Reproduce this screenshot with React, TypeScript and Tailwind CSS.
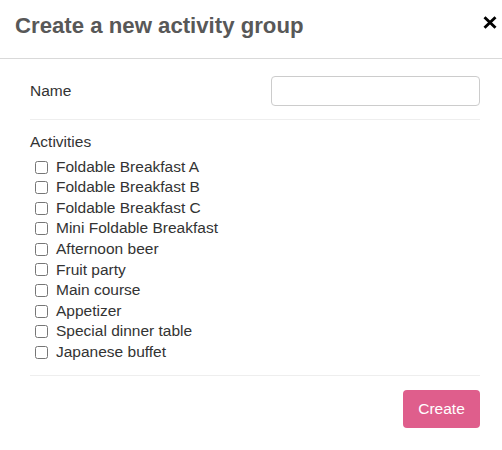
import React from "react";

const activities = [
  "Foldable Breakfast A",
  "Foldable Breakfast B",
  "Foldable Breakfast C",
  "Mini Foldable Breakfast",
  "Afternoon beer",
  "Fruit party",
  "Main course",
  "Appetizer",
  "Special dinner table",
  "Japanese buffet",
];

export default function App() {
  return (
    <div className="w-[502px] h-[450px] bg-white font-['Liberation_Sans',Arial,sans-serif] text-[#333]">
      <div className="h-[59px] border-b border-[#d9d9d9] flex items-start justify-between pl-[15px] pr-[5px] pt-[13px]">
        <h4 className="text-[22.2px] leading-[25px] font-bold text-[#585858] m-0">Create a new activity group</h4>
        <svg width="14" height="13" viewBox="0 0 14 13" className="mt-[3px]">
          <path d="M1.5 1.2 L12.5 11.8 M12.5 1.2 L1.5 11.8" stroke="#000" strokeWidth="2.9" fill="none" />
        </svg>
      </div>
      <div className="pl-[30px] pr-[22px]">
        <div className="pt-[17px] flex items-center justify-between">
          <span className="text-[15.5px] leading-[20px]">Name</span>
          <input
            type="text"
            className="w-[209px] h-[30px] border border-[#cccccc] rounded-[4px] outline-none px-2"
          />
        </div>
        <div className="mt-[13px] h-px bg-[#eeeeee]" />
        <div className="pt-[12px]">
          <div className="text-[15.5px] leading-[20.7px]">Activities</div>
          <div className="mt-[4px] flex flex-col">
            {activities.map((a) => (
              <label key={a} className="flex items-center h-[20.6px] text-[15.5px] leading-[20.6px]">
                <input type="checkbox" className="w-[13px] h-[13px] ml-[5px] mr-[8px] m-0" />
                <span>{a}</span>
              </label>
            ))}
          </div>
        </div>
        <div className="mt-[12px] h-px bg-[#eeeeee]" />
        <div className="mt-[14px] flex justify-end">
          <button className="w-[77px] h-[38px] rounded-[4px] bg-[#df5e8c] text-white text-[15.5px]">
            Create
          </button>
        </div>
      </div>
    </div>
  );
}
